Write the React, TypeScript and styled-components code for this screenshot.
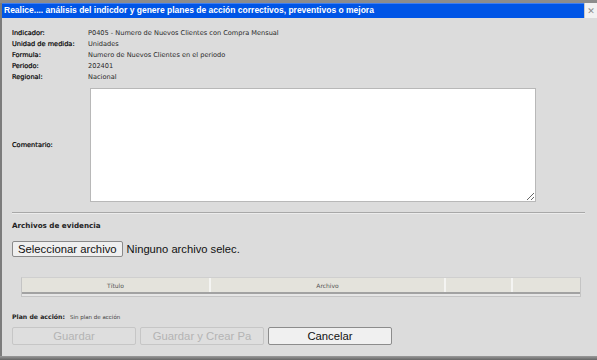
import React from "react";
import styled, { createGlobalStyle } from "styled-components";

const Global = createGlobalStyle`
  html, body { margin: 0; padding: 0; background: #dcdcdc; }
  body { width: 597px; height: 360px; overflow: hidden; font-family: "Liberation Sans", Arial, sans-serif; }
  * { box-sizing: border-box; }
`;

const Window = styled.div`
  width: 597px;
  height: 360px;
  display: flex;
  flex-direction: column;
  background: #dcdcdc;
  border-left: 2px solid #7c7c7c;
`;

const TopStrip = styled.div`
  height: 3px;
  background: #8c8c8c;
  margin-left: -2px;
`;

const TitleBar = styled.div`
  height: 15px;
  display: flex;
  align-items: stretch;
  background: #0055e6;
  border-top: 1px solid #3f7ef0;
`;

const TitleText = styled.div`
  flex: 1;
  min-width: 0;
  overflow: hidden;
  color: #ffffff;
  font-family: "Liberation Sans", Arial, sans-serif;
  font-weight: bold;
  font-size: 8.5px;
  line-height: 13px;
  padding-left: 2px;
  white-space: nowrap;
`;

const CloseBox = styled.div`
  width: 13px;
  flex: none;
  margin-top: -1px;
  background: #f2f2f2;
  border-left: 1px solid #c8c8c8;
  display: flex;
  align-items: center;
  justify-content: center;
  color: #8a8a8a;
  font-size: 9px;
  font-family: "DejaVu Sans", sans-serif;
`;

const Body = styled.div`
  flex: 1;
  padding: 10px 12px 0 10px;
  display: flex;
  flex-direction: column;
`;

const InfoGrid = styled.div`
  display: grid;
  grid-template-columns: 76px 1fr;
  grid-auto-rows: 11px;
  line-height: 11px;
`;

const Label = styled.div`
  font-family: "DejaVu Sans", Verdana, sans-serif;
  font-size: 6.6px;
  color: #000;
  -webkit-text-stroke: 0.2px #000;
  white-space: nowrap;
`;

const Value = styled.div`
  font-family: "DejaVu Sans", Verdana, sans-serif;
  font-size: 6.6px;
  color: #2a2a2a;
  white-space: nowrap;
`;

const CommentRow = styled.div`
  display: grid;
  grid-template-columns: 78px 1fr;
  align-items: center;
  margin-top: 5px;
`;

const TextArea = styled.textarea`
  width: 446px;
  height: 114px;
  background: #ffffff;
  border: 1px solid #b8b8b8;
  resize: both;
  margin: 0;
  padding: 2px;
`;

const Separator = styled.hr`
  margin: 10px 0 0 0;
  width: 573px;
  border: none;
  border-top: 1px solid #a8a8a8;
  border-bottom: 1px solid #ececec;
  height: 0;
`;

const SectionTitle = styled.div`
  margin-top: 6px;
  font-family: "DejaVu Sans", Verdana, sans-serif;
  font-size: 7.2px;
  font-weight: bold;
  color: #1e1e1e;
  line-height: 11px;
`;

const FileRow = styled.div`
  margin-top: 10px;
  display: flex;
  align-items: center;
  gap: 4px;
`;

const FileButton = styled.button`
  height: 16px;
  padding: 0 5px;
  font-family: "Liberation Sans", Arial, sans-serif;
  font-size: 11.3px;
  color: #111;
  background: #efefef;
  border: 1px solid #8a8a8a;
  border-radius: 2px;
  line-height: 14px;
`;

const FileText = styled.span`
  font-family: "Liberation Sans", Arial, sans-serif;
  font-size: 11.2px;
  color: #111;
`;

const Table = styled.div`
  margin: 20px 0 0 9px;
  width: 560px;
  border: 1px solid #c4c4c4;
  border-top-color: #cfcfcf;
  padding-bottom: 2px;
  background: #e6e6e6;
`;

const HeaderRow = styled.div`
  display: grid;
  grid-template-columns: 189px 235px 67px 1fr;
  border-bottom: 2px solid #a2a2a2;
`;

const HeaderCell = styled.div`
  height: 14px;
  background: #e4e3dc;
  border-right: 2px solid #f4f4f2;
  font-family: "DejaVu Sans", Verdana, sans-serif;
  font-size: 6px;
  color: #555;
  line-height: 15px;
  text-align: center;
  &:last-child { border-right: none; }
`;

const PlanRow = styled.div`
  margin-top: 16px;
  display: flex;
  align-items: baseline;
  gap: 5px;
`;

const PlanLabel = styled.span`
  font-family: "DejaVu Sans", Verdana, sans-serif;
  font-size: 6.2px;
  font-weight: bold;
  color: #1e1e1e;
`;

const PlanValue = styled.span`
  font-family: "DejaVu Sans", Verdana, sans-serif;
  font-size: 5.5px;
  color: #444;
`;

const ButtonRow = styled.div`
  margin-top: 7px;
  display: flex;
  gap: 4px;
`;

const ActionButton = styled.button<{ $enabled?: boolean }>`
  width: 124px;
  height: 18px;
  padding: 0;
  font-family: "Liberation Sans", Arial, sans-serif;
  font-size: 11.3px;
  line-height: 16px;
  border-radius: 2px;
  color: ${(p) => (p.$enabled ? "#111" : "#b4b4b4")};
  background: ${(p) => (p.$enabled ? "#f0f0f0" : "#dedede")};
  border: 1px solid ${(p) => (p.$enabled ? "#8c8c8c" : "#c6c6c6")};
`;

const BottomBar = styled.div`
  height: 4px;
  margin-left: -2px;
  background: linear-gradient(#9a9a9a, #666666);
`;

export default function App() {
  const info: [string, string][] = [
    ["Indicador:", "P0405 - Numero de Nuevos Clientes con Compra Mensual"],
    ["Unidad de medida:", "Unidades"],
    ["Formula:", "Numero de Nuevos Clientes en el periodo"],
    ["Periodo:", "202401"],
    ["Regional:", "Nacional"],
  ];
  return (
    <>
      <Global />
      <Window>
        <TopStrip />
        <TitleBar>
          <TitleText>
            Realice.... análisis del indicdor y genere planes de acción correctivos, preventivos o mejora
          </TitleText>
          <CloseBox>✕</CloseBox>
        </TitleBar>
        <Body>
          <InfoGrid>
            {info.map(([l, v]) => (
              <React.Fragment key={l}>
                <Label>{l}</Label>
                <Value>{v}</Value>
              </React.Fragment>
            ))}
          </InfoGrid>
          <CommentRow>
            <Label>Comentario:</Label>
            <TextArea />
          </CommentRow>
          <Separator />
          <SectionTitle>Archivos de evidencia</SectionTitle>
          <FileRow>
            <FileButton>Seleccionar archivo</FileButton>
            <FileText>Ninguno archivo selec.</FileText>
          </FileRow>
          <Table>
            <HeaderRow>
              <HeaderCell>Título</HeaderCell>
              <HeaderCell>Archivo</HeaderCell>
              <HeaderCell />
              <HeaderCell />
            </HeaderRow>
          </Table>
          <PlanRow>
            <PlanLabel>Plan de acción:</PlanLabel>
            <PlanValue>Sin plan de acción</PlanValue>
          </PlanRow>
          <ButtonRow>
            <ActionButton disabled>Guardar</ActionButton>
            <ActionButton disabled>Guardar y Crear Pa</ActionButton>
            <ActionButton $enabled>Cancelar</ActionButton>
          </ButtonRow>
        </Body>
        <BottomBar />
      </Window>
    </>
  );
}
